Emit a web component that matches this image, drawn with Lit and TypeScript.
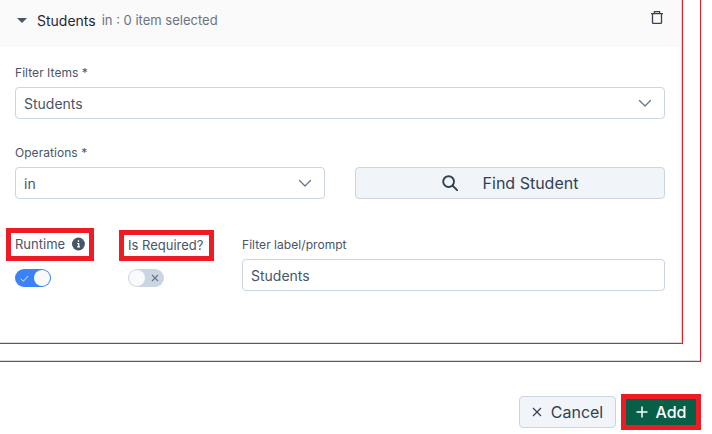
import { LitElement, html, css, svg } from "lit";
import { customElement } from "lit/decorators.js";

const chevron = html`<svg class="chev" width="14" height="14" viewBox="0 0 14 14" fill="none"><path d="M1.5 4.5 7 10l5.5-5.5" stroke="#64748b" stroke-width="1.3" stroke-linecap="round" stroke-linejoin="round"/></svg>`;

@customElement("app-root")
export class AppRoot extends LitElement {
  static styles = css`
    :host { display: block; width: 712px; height: 434px; background: #fff; font-family: Inter, "Noto Sans", sans-serif; color: #475569; overflow: hidden; }
    * { box-sizing: border-box; }
    .outer { width: 701px; height: 362px; border-right: 1px solid #ed1c24; border-bottom: 1px solid #ed1c24; box-shadow: inset 0 -1px 0 #d9d9d9; padding-right: 17px; padding-bottom: 17px; }
    .panel { width: 683px; height: 344px; border-right: 1px solid #ed1c24; border-bottom: 1px solid #ed1c24; box-shadow: inset 0 -1px 0 #d9d9d9, inset -1px 0 0 #d9d9d9; display: flex; flex-direction: column; }
    .head { height: 47px; margin-right: 1px; background: #fafafa; display: flex; align-items: flex-start; padding: 13px 18px 0 17px; }
    .caret { width: 0; height: 0; border-left: 5px solid transparent; border-right: 5px solid transparent; border-top: 5.5px solid #4b5563; margin-top: 5px; margin-right: 10px; }
    .title { font-size: 14px; line-height: 15px; color: #1f2937; }
    .sub { font-size: 13px; line-height: 15px; color: #6b7280; margin-left: 6px; }
    .trash { margin-left: auto; margin-top: -2px; }
    .body { padding: 0 17px 0 15px; display: flex; flex-direction: column; }
    label, .lab { font-size: 12px; font-weight: 400; line-height: 14px; color: #475569; display: block; letter-spacing: 0.05px; }
    .first { margin-top: 19px; }
    .field { height: 32px; margin-top: 7px; border: 1px solid #cbd5e1; border-radius: 4px; background: #fff; display: flex; align-items: center; justify-content: space-between; padding: 0 8px; font-size: 14px; color: #475569; }
    .field .chev { margin-right: 4px; }
    .ops-label { margin-top: 27px; }
    .two { display: grid; grid-template-columns: 310px 310px; column-gap: 30px; }
    .find { height: 32px; margin-top: 7px; border: 1px solid #cbd5e1; border-radius: 4px; background: #f1f5f9; display: flex; align-items: center; justify-content: center; gap: 25px; font-size: 16px; font-weight: 400; color: #334155; }
    .row3 { display: flex; margin-top: 34px; margin-left: -4px; }
    .c1 { width: 113px; flex: none; }
    .c2 { width: 118px; flex: none; }
    .c3 { flex: 1; }
    .boxed { display: flex; align-items: center; height: 23px; padding: 0 4px; outline: 5px solid #ed1c24; font-size: 13px; font-weight: 400; color: #475569; }
    .b1 { width: 78px; gap: 7px; padding-bottom: 1px; }
    .b2 { width: 85px; height: 21px; margin-top: 2px; padding-bottom: 2px; }
    .c3 .lab { margin-top: 5px; }
    .toggle { width: 36px; height: 18px; border-radius: 9px; margin: 13px 0 0 4px; display: flex; align-items: center; justify-content: space-between; padding: 0 1px; }
    .on { background: #3b82f6; padding-left: 5px; }
    .off { background: #cbd5e1; padding-right: 5px; }
    .knob { width: 16px; height: 16px; border-radius: 50%; background: #f8fafc; flex: none; }
    .foot { display: flex; justify-content: flex-end; align-items: center; height: 36px; margin-top: 32px; padding-right: 16px; gap: 10px; }
    .cancel { width: 97px; height: 32px; border: 1px solid #cbd5e1; border-radius: 4px; background: #f1f5f9; display: flex; align-items: center; justify-content: center; gap: 9px; font-size: 16px; font-weight: 400; color: #334155; }
    .add { width: 70px; height: 26px; background: #065f46; outline: 5px solid #ed1c24; display: flex; align-items: center; justify-content: center; gap: 8px; font-size: 16px; font-weight: 500; color: #fff; }
  `;

  render() {
    return html`
      <div class="outer">
        <div class="panel">
          <div class="head">
            <span class="caret"></span>
            <span class="title">Students</span>
            <span class="sub">in : 0 item selected</span>
            <svg class="trash" width="12" height="13" viewBox="0 0 12 13" fill="none" stroke="#374151" stroke-width="1.3">
              ${svg`<path d="M0 2.6h12M3.4 2.4V.7h5.2v1.7M1.5 2.6v9c0 .5.4.8.8.8h7.4c.4 0 .8-.3.8-.8v-9"/>`}
            </svg>
          </div>
          <div class="body">
            <label class="first">Filter Items *</label>
            <div class="field"><span>Students</span>${chevron}</div>
            <label class="ops-label">Operations *</label>
            <div class="two">
              <div class="field"><span>in</span>${chevron}</div>
              <div class="find">
                <svg width="16" height="16" viewBox="0 0 16 16" fill="none" stroke="#334155" stroke-width="1.9"><circle cx="6.6" cy="6.6" r="5.4"/><path d="m10.5 10.5 4.8 4.8" stroke-linecap="round"/></svg>
                <span>Find Student</span>
              </div>
            </div>
            <div class="row3">
              <div class="c1">
                <div class="boxed b1">
                  <span>Runtime</span>
                  <svg width="14" height="14" viewBox="0 0 14 14"><circle cx="7" cy="7" r="7" fill="#475569"/><path d="M7 3v1.7M5.7 6.5H7.3v3.6M5.5 10.2h3.2" stroke="#fff" stroke-width="1.4" fill="none"/></svg>
                </div>
                <div class="toggle on">
                  <svg width="9" height="9" viewBox="0 0 9 9" fill="none" stroke="#dbeafe" stroke-width="1"><path d="M.8 4.8 3.4 7.2 8.2 2"/></svg>
                  <span class="knob"></span>
                </div>
              </div>
              <div class="c2">
                <div class="boxed b2">Is Required?</div>
                <div class="toggle off">
                  <span class="knob"></span>
                  <svg width="8" height="8" viewBox="0 0 8 8" fill="none" stroke="#64748b" stroke-width="1.1"><path d="m1 1 6 6M7 1 1 7"/></svg>
                </div>
              </div>
              <div class="c3">
                <label class="lab">Filter label/prompt</label>
                <div class="field"><span>Students</span></div>
              </div>
            </div>
          </div>
        </div>
      </div>
      <div class="foot">
        <div class="cancel">
          <svg width="10" height="10" viewBox="0 0 10 10" fill="none" stroke="#334155" stroke-width="1.2"><path d="m1 1 8 8M9 1 1 9"/></svg>
          <span>Cancel</span>
        </div>
        <div class="add">
          <svg width="12" height="12" viewBox="0 0 12 12" fill="none" stroke="#fff" stroke-width="1.5"><path d="M6 .5v11M.5 6h11"/></svg>
          <span>Add</span>
        </div>
      </div>
    `;
  }
}
